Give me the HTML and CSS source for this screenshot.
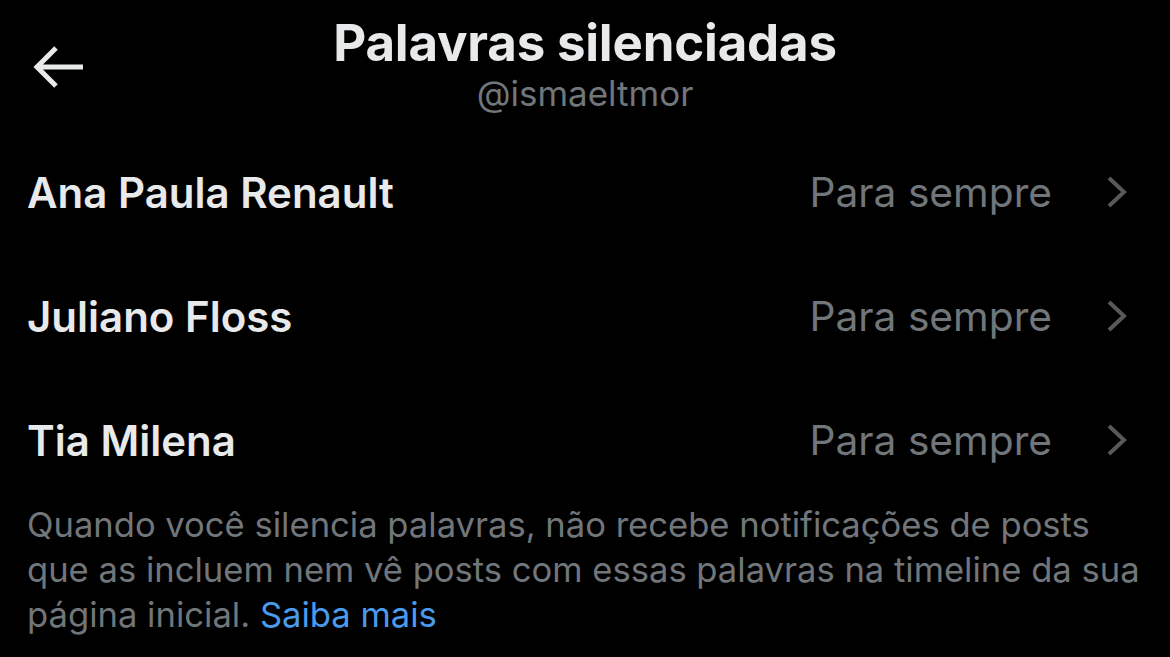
FILE: index.html
```html
<!DOCTYPE html>
<html lang="pt-BR">
<head>
  <meta charset="UTF-8">
  <title>Palavras silenciadas</title>
  <link rel="stylesheet" href="styles.css">
</head>
<body>

  <header class="topbar">
    <a href="#" class="back" aria-label="Voltar">
      <svg width="52" height="46" viewBox="0 0 52 46">
        <path d="M50 23 H5 M23 4 L4 23 L23 42" fill="none" stroke="#e7e9ea" stroke-width="5" stroke-linecap="butt" stroke-linejoin="miter"/>
      </svg>
    </a>
    <div class="titles">
      <h1>Palavras silenciadas</h1>
      <p class="handle">@ismaeltmor</p>
    </div>
  </header>

  <main>
    <ul class="word-list">
      <li class="word-row">
        <span class="word">Ana Paula Renault</span>
        <span class="duration">Para sempre</span>
        <svg class="chevron" width="22" height="34" viewBox="0 0 22 34"><path d="M3 3 L18 17 L3 31" fill="none" stroke="#575a5d" stroke-width="4"/></svg>
      </li>
      <li class="word-row">
        <span class="word">Juliano Floss</span>
        <span class="duration">Para sempre</span>
        <svg class="chevron" width="22" height="34" viewBox="0 0 22 34"><path d="M3 3 L18 17 L3 31" fill="none" stroke="#575a5d" stroke-width="4"/></svg>
      </li>
      <li class="word-row">
        <span class="word">Tia Milena</span>
        <span class="duration">Para sempre</span>
        <svg class="chevron" width="22" height="34" viewBox="0 0 22 34"><path d="M3 3 L18 17 L3 31" fill="none" stroke="#575a5d" stroke-width="4"/></svg>
      </li>
    </ul>

    <p class="note">
      Quando você silencia palavras, não recebe notificações de posts<br>
      que as incluem nem vê posts com essas palavras na timeline da sua<br>
      página inicial. <a href="#">Saiba mais</a>
    </p>
  </main>

</body>
</html>
```

FILE: styles.css
```css
* {
  margin: 0;
  padding: 0;
  box-sizing: border-box;
}

body, html {
  background: #000;
  color: #e7e9ea;
  font-family: Inter, 'Noto Sans', sans-serif;
  overflow: hidden;
}

.topbar {
  display: flex;
  align-items: flex-start;
  height: 136px;
  padding: 4px 0 0 33px;
}

.back {
  display: flex;
  margin-top: 40px;
}

.titles {
  flex: 1;
  text-align: center;
  margin-left: -85px;
}

.titles h1 {
  font-size: 51px;
  font-weight: 700;
  line-height: 78px;
  letter-spacing: -0.2px;
}

.handle {
  font-size: 35px;
  line-height: 38px;
  color: #71767b;
  margin-top: -8px;
}

.word-list {
  list-style: none;
}

.word-row {
  display: flex;
  align-items: center;
  height: 124px;
  padding: 0 42px 0 27px;
}

.word-row:first-child {
  margin-top: -6px;
}

.word {
  flex: 1;
  font-size: 42px;
  font-weight: 600;
}

.duration {
  font-size: 40.7px;
  color: #71767b;
  margin-right: 54px;
}

.chevron {
  display: block;
}

.note {
  padding: 0 10px 0 27px;
  font-size: 34.6px;
  line-height: 45px;
  color: #71767b;
  white-space: nowrap;
}

.note a {
  color: #4a9bec;
  text-decoration: none;
}
```
